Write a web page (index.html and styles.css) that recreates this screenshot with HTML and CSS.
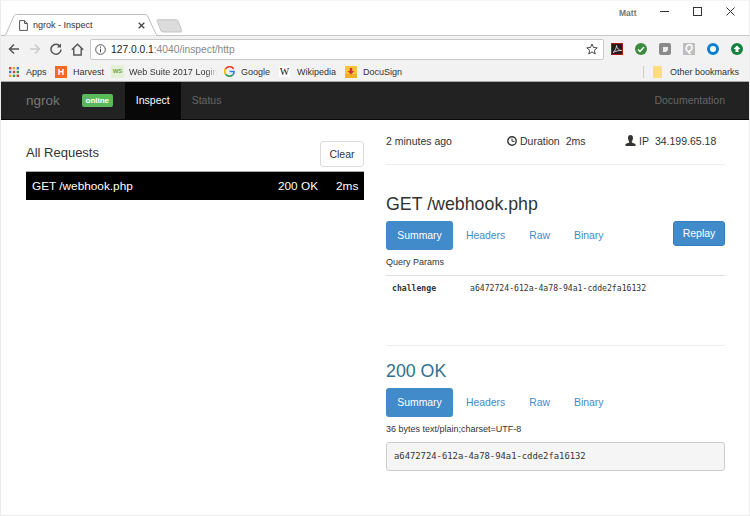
FILE: index.html
```html
<!DOCTYPE html>
<html lang="en">
<head>
<meta charset="utf-8">
<title>ngrok - Inspect</title>
<link rel="stylesheet" href="styles.css">
</head>
<body>
<div class="window">
  <header class="chrome">
    <div class="titlebar">
      <div class="tab">
        <svg class="tab-shape" width="160" height="22" viewBox="0 0 160 22"><path d="M0 21.500H2.500C3.500 21.500 4.500 21 5 20L12.500 3C13 1.500 14 .5 15.500 .5H144C145.500 .5 146.500 1.500 147 3L155 20C155.500 21 156.500 21.500 158 21.500H160" fill="#fff" stroke="#bdbdbd"/></svg>
        <svg class="tab-doc" width="9" height="11" viewBox="0 0 9 11"><path d="M.6.6H5.500L8.400 3.500V10.400H.6ZM5.500.6V3.500H8.400" fill="#fff" stroke="#555" stroke-width="1"/></svg>
        <span class="tab-title">ngrok - Inspect</span>
        <svg class="tab-close" width="7" height="7" viewBox="0 0 7 7"><path d="M.7.7L6.300 6.300M6.300.7L.7 6.300" stroke="#444" stroke-width="1.300"/></svg>
      </div>
      <svg class="newtab" width="27" height="14" viewBox="0 0 27 14"><path d="M1 1.500C1 1 1.500 .7 2 .7H20C21 .7 21.500 1 22 2L25.500 11C25.800 12 25.500 13 24.500 13H7C6 13 5.500 12.500 5 12Z" fill="#dcdcdc" stroke="#c4c4c4"/></svg>
      <span class="user">Matt</span>
      <div class="winctl">
        <svg width="9" height="9" viewBox="0 0 9 9"><path d="M0 4.500H9" stroke="#333"/></svg>
        <svg width="9" height="9" viewBox="0 0 9 9"><rect x=".5" y=".5" width="8" height="8" fill="none" stroke="#333"/></svg>
        <svg width="9" height="9" viewBox="0 0 9 9"><path d="M.5.5L8.500 8.500M8.500.5L.5 8.500" stroke="#333"/></svg>
      </div>
    </div>
    <div class="toolbar">
      <svg class="tool" width="12" height="12" viewBox="0 0 12 12"><path d="M11 6H1.500M6 1.500L1.500 6L6 10.500" fill="none" stroke="#555" stroke-width="1.500"/></svg>
      <svg class="tool" width="12" height="12" viewBox="0 0 12 12"><path d="M1 6H10.500M6 1.500L10.500 6L6 10.500" fill="none" stroke="#ccc" stroke-width="1.500"/></svg>
      <svg class="tool" width="12" height="12" viewBox="0 0 12 12"><path d="M10 3.200A5 5 0 1 0 11 6.500" fill="none" stroke="#555" stroke-width="1.500"/><path d="M11 .5V4.500H7Z" fill="#555"/></svg>
      <svg class="tool" width="13" height="13" viewBox="0 0 13 13"><path d="M.8 6.800L6.500 1.200L12.200 6.800M2.800 5.500V12H10.200V5.500" fill="none" stroke="#555" stroke-width="1.400"/></svg>
      <div class="omnibox">
        <svg width="11" height="11" viewBox="0 0 11 11"><circle cx="5.500" cy="5.500" r="4.800" fill="none" stroke="#555"/><path d="M5.500 4.700V8.300M5.500 2.600V3.800" stroke="#555"/></svg>
        <span class="url"><b>127.0.0.1</b>:4040/inspect/http</span>
        <svg class="star" width="12" height="12" viewBox="0 0 12 12"><path d="M6 1L7.500 4.500L11.200 4.800L8.400 7.300L9.200 11L6 9L2.800 11L3.600 7.300L.8 4.800L4.500 4.500Z" fill="none" stroke="#444"/></svg>
      </div>
      <div class="exts">
        <svg width="12" height="12" viewBox="0 0 12 12"><rect x=".5" y=".5" width="11" height="11" fill="#2a1a1a" stroke="#a31d12"/><path d="M2 9.500C4 8 5.500 5 5.500 2.500C6 5.500 8 7.500 10.500 7.500C8 7.500 4.500 8 2 9.500Z" fill="none" stroke="#eee" stroke-width=".8"/></svg>
        <svg width="12" height="12" viewBox="0 0 12 12"><circle cx="6" cy="6" r="6" fill="#3b8a3e"/><path d="M3 6.500L5 8.500L9 4" fill="none" stroke="#fff" stroke-width="1.500"/></svg>
        <svg width="12" height="12" viewBox="0 0 12 12"><rect width="12" height="12" rx="2" fill="#8a8a8a"/><path d="M4 4H9V7L7 9H4Z" fill="#eee"/></svg>
        <span class="ext-q">Q</span>
        <svg width="12" height="12" viewBox="0 0 12 12"><circle cx="6" cy="6" r="4.500" fill="#fff" stroke="#0a7fd0" stroke-width="3"/></svg>
        <svg width="12" height="12" viewBox="0 0 12 12"><circle cx="6" cy="6" r="6" fill="#14813f"/><path d="M6 2.500L9.500 6H7.500V9H4.500V6H2.500Z" fill="#fff"/></svg>
      </div>
    </div>
    <div class="bookmarks">
      <span class="bm bm-apps"><svg width="10" height="10" viewBox="0 0 10 10"><g><rect width="2.400" height="2.400" fill="#d9412f"/><rect x="3.800" width="2.400" height="2.400" fill="#e9a52a"/><rect x="7.600" width="2.400" height="2.400" fill="#3b7de0"/><rect y="3.800" width="2.400" height="2.400" fill="#3b7de0"/><rect x="3.800" y="3.800" width="2.400" height="2.400" fill="#d9412f"/><rect x="7.600" y="3.800" width="2.400" height="2.400" fill="#2e9e4f"/><rect y="7.600" width="2.400" height="2.400" fill="#e9a52a"/><rect x="3.800" y="7.600" width="2.400" height="2.400" fill="#2e9e4f"/><rect x="7.600" y="7.600" width="2.400" height="2.400" fill="#d9412f"/></g></svg>Apps</span>
      <span class="bm bm-harvest"><i class="fav-h">H</i>Harvest</span>
      <span class="bm bm-web"><i class="fav-ws">WS</i><span class="fade">Web Suite 2017 Login</span></span>
      <span class="bm bm-google"><svg width="11" height="11" viewBox="0 0 12 12"><path d="M10.500 3.200A5.200 5.200 0 0 0 1.500 3.500" fill="none" stroke="#e2402f" stroke-width="1.800"/><path d="M1.500 3.500A5.200 5.200 0 0 0 1.800 9" fill="none" stroke="#f0b400" stroke-width="1.800"/><path d="M1.800 9A5.200 5.200 0 0 0 9.500 9.800" fill="none" stroke="#2e9e4f" stroke-width="1.800"/><path d="M9.500 9.800A5.200 5.200 0 0 0 11 6H6" fill="none" stroke="#3b7de0" stroke-width="1.800"/></svg>Google</span>
      <span class="bm bm-wiki"><i class="fav-w">W</i>Wikipedia</span>
      <span class="bm bm-docu"><svg width="12" height="12" viewBox="0 0 12 12"><rect width="12" height="12" rx="1" fill="#f7c23e"/><rect y="8" width="12" height="4" fill="#eeb02c"/><path d="M6 8.500L2.800 5H4.800V2H7.200V5H9.200Z" fill="#d5322c"/></svg>DocuSign</span>
      <span class="bm-sep"></span>
      <span class="bm bm-other"><svg width="9" height="12" viewBox="0 0 9 12"><path d="M0 1C0 .4.4 0 1 0H7.500L9 1V11C9 11.600 8.600 12 8 12H1C.4 12 0 11.600 0 11Z" fill="#fbdc85"/></svg>Other bookmarks</span>
    </div>
  </header>

  <nav class="navbar">
    <span class="brand">ngrok</span>
    <span class="badge">online</span>
    <a class="nav-item active">Inspect</a>
    <a class="nav-item">Status</a>
    <a class="nav-item nav-doc">Documentation</a>
  </nav>

  <main class="content">
    <section class="requests">
      <div class="requests-head">
        <h4>All Requests</h4>
        <button class="btn-clear">Clear</button>
      </div>
      <div class="req-row">
        <span class="req-path">GET /webhook.php</span>
        <span class="req-status">200 OK</span>
        <span class="req-time">2ms</span>
      </div>
    </section>

    <section class="detail">
      <div class="meta">
        <span class="meta-ago">2 minutes ago</span>
        <span class="meta-dur"><svg width="10" height="10" viewBox="0 0 10 10"><circle cx="5" cy="5" r="4.200" fill="none" stroke="#333" stroke-width="1.400"/><path d="M5 2.500V5.300H7.500" fill="none" stroke="#333"/></svg>Duration<em>2ms</em></span>
        <span class="meta-ip"><svg width="11" height="11" viewBox="0 0 11 11"><path d="M5.500 0C7.200 0 8 1.200 8 3C8 4.500 7.200 6 6.800 6.500V7.500L10.500 9V11H.5V9L4.200 7.500V6.500C3.800 6 3 4.500 3 3C3 1.200 3.800 0 5.500 0Z" fill="#333"/></svg>IP<em>34.199.65.18</em></span>
      </div>

      <h3 class="req-title">GET /webhook.php</h3>
      <div class="tabs-row">
        <ul class="tabs">
          <li class="active">Summary</li><li>Headers</li><li>Raw</li><li>Binary</li>
        </ul>
        <button class="btn-replay">Replay</button>
      </div>
      <h6 class="small-head">Query Params</h6>
      <table class="params">
        <tr><th>challenge</th><td>a6472724-612a-4a78-94a1-cdde2fa16132</td></tr>
      </table>

      <h3 class="res-title">200 OK</h3>
      <ul class="tabs">
        <li class="active">Summary</li><li>Headers</li><li>Raw</li><li>Binary</li>
      </ul>
      <h6 class="small-head res-head">36 bytes text/plain;charset=UTF-8</h6>
      <pre class="body-pre">a6472724-612a-4a78-94a1-cdde2fa16132</pre>
    </section>
  </main>
</div>
</body>
</html>
```
FILE: styles.css
```css
* { box-sizing: border-box; }
html, body { margin: 0; padding: 0; background: #fff; }
body { width: 750px; height: 516px; overflow: hidden; font-family: "Liberation Sans", Arial, sans-serif; color: #333; }
.window { width: 750px; height: 516px; border: 1px solid #ececec; border-top-color: #f4f4f4; background: #fff; overflow: hidden; }

/* browser chrome */
.chrome { margin: -1px -1px 0; }
.titlebar { height: 36px; display: flex; align-items: flex-start; background: #fff; border-bottom: 1px solid #c6c6c6; }
.tab { position: relative; width: 160px; height: 22px; margin: 14px 0 0 1px; display: flex; align-items: center; z-index: 1; }
.tab-shape { position: absolute; left: 0; top: 0; }
.tab-doc { position: relative; margin-left: 18px; }
.tab-title { position: relative; margin-left: 5px; font: 9px "Liberation Sans", Arial, sans-serif; color: #333; white-space: nowrap; }
.tab-close { position: relative; margin-left: 45px; }
.newtab { margin: 19px 0 0 -5px; }
.user { margin: 8px 0 0 436px; font: bold 8.500px "Liberation Sans", Arial, sans-serif; color: #777; }
.winctl { display: flex; gap: 24px; margin: 7px 0 0 24px; }

.toolbar { height: 26px; background: #f2f2f2; display: flex; align-items: center; padding-left: 8px; }
.toolbar .tool { margin-right: 9px; }
.omnibox { width: 514px; height: 21px; margin-left: -3px; background: #fff; border: 1px solid #c8c8c8; border-radius: 2px; display: flex; align-items: center; padding: 0 5px 0 4px; }
.url { margin-left: 5px; font-size: 10.250px; color: #888; }
.url b { font-weight: normal; color: #222; }
.star { margin-left: auto; }
.exts { display: flex; gap: 12px; margin-left: 7px; }
.ext-q { width: 12px; height: 12px; background: #bdbdbd; color: #fff; font: italic bold 10px/12px "Liberation Sans", Arial, sans-serif; text-align: center; }

.bookmarks { height: 20px; background: #f2f2f2; display: flex; align-items: center; padding: 0 11px 0 9px; font-size: 9px; color: #333; white-space: nowrap; border-bottom: 1px solid #a8a8a8; }
.bm { display: flex; align-items: center; gap: 6px; }
.bm i { font-style: normal; }
.bm-apps { gap: 7px; width: 46px; }
.bm-harvest { width: 56px; }
.bm-web { width: 113px; gap: 5px; }
.bm-google { width: 55px; }
.bm-wiki { width: 66px; gap: 7px; }
.fav-h { width: 12px; height: 12px; background: #f36b21; color: #fff; font: bold 9px "Liberation Sans", Arial, sans-serif; text-align: center; line-height: 12px; }
.fav-ws { width: 13px; height: 13px; background: #e4efd8; color: #6da544; font: bold 6px "Liberation Sans", Arial, sans-serif; text-align: center; line-height: 13px; }
.fav-w { width: 11px; height: 11px; background: #fff; color: #111; font: 10px "Liberation Serif", serif; text-align: center; line-height: 11px; }
.fade { color: #333; -webkit-mask-image: linear-gradient(to right, #000 88%, transparent); mask-image: linear-gradient(to right, #000 88%, transparent); }
.bm-sep { width: 1px; height: 12px; background: #ccc; margin-left: auto; }
.bm-other { margin-left: 9px; gap: 8px; }

/* navbar */
.navbar { height: 38px; margin: 0 -1px; background: #222; border-bottom: 1px solid #080808; display: flex; align-items: stretch; padding: 0 25px 0 26px; font-size: 10.500px; color: #777; }
.brand { font-size: 13.500px; line-height: 37px; color: #777; }
.badge { align-self: center; margin-left: 22px; width: 31px; height: 13px; background: #5cb85c; color: #fff; border-radius: 2px; font-size: 8px; font-weight: bold; line-height: 13px; text-align: center; }
.nav-item { padding: 0 11px; line-height: 37px; color: #666; }
.nav-item.active { margin-left: 12px; padding: 0 11px; background: #080808; color: #fff; }
.nav-doc { margin-left: auto; padding: 0; }

/* content */
.content { display: flex; padding: 14px 24px 0 25px; }
.requests { width: 338px; margin-right: 22px; padding-top: 7px; }
.requests-head { display: flex; justify-content: space-between; align-items: flex-start; height: 26px; margin-bottom: 4px; }
.requests-head h4 { margin: 0; font-size: 13px; font-weight: normal; line-height: 23px; color: #333; }
.btn-clear { width: 44px; height: 26px; padding: 0; background: #fff; border: 1px solid #ddd; border-radius: 3px; font: 10.500px "Liberation Sans", Arial, sans-serif; color: #333; }
.req-row { height: 29px; background: #000; border-top: 1px solid #aaa; color: #fff; font-size: 11.800px; display: flex; align-items: center; padding: 0 6px; }
.req-path { flex: 1; }
.req-status { width: 58px; }
.req-time { width: 22px; }

.detail { width: 339px; }
.meta { display: flex; height: 29px; padding-top: 1px; border-bottom: 1px solid #eee; font-size: 10.500px; line-height: 13px; color: #333; box-sizing: content-box; }
.meta em { font-style: normal; margin-left: 6px; }
.meta svg { margin-right: 3px; vertical-align: -1px; }
.meta-ago { width: 121px; }
.meta-dur { width: 118px; }
.req-title { margin: 28px 0 0; font-size: 17.800px; font-weight: normal; line-height: 22px; color: #333; }
.tabs-row { display: flex; justify-content: space-between; align-items: flex-start; margin-top: 6px; }
.tabs { list-style: none; display: flex; margin: 0; padding: 0; font-size: 10.400px; color: #428bca; }
.tabs li { padding: 0 12px; height: 29px; line-height: 29px; }
.tabs li.active { width: 67px; margin-right: 1px; background: #428bca; color: #fff; border-radius: 3px; padding: 0; text-align: center; }
.btn-replay { width: 52px; height: 25px; padding: 0 0 2px; background: #428bca; border: 1px solid #357ebd; border-radius: 3px; color: #fff; font: 10.500px "Liberation Sans", Arial, sans-serif; }
.small-head { margin: 7px 0 0; font-size: 9px; font-weight: normal; line-height: 11px; color: #333; }
.params { width: 100%; margin-top: 7px; border-collapse: collapse; border-top: 1px solid #ddd; font: 8.150px "DejaVu Sans Mono", monospace; }
.params th { width: 84px; padding: 7px 0 0 6px; text-align: left; font-weight: bold; line-height: 11px; }
.params td { padding: 7px 0 0; line-height: 11px; color: #333; }
.res-title { margin: 51px 0 0; padding-top: 14px; border-top: 1px solid #eee; font-size: 17.800px; font-weight: normal; line-height: 22px; color: #31708f; }
.res-title + .tabs { margin-top: 6px; }
.res-head { margin-top: 7px; }
.body-pre { margin: 7px 0 0; height: 29px; padding: 0 7px; background: #f5f5f5; border: 1px solid #ccc; border-radius: 3px; font: 8.850px/27px "DejaVu Sans Mono", monospace; color: #333; }
```
